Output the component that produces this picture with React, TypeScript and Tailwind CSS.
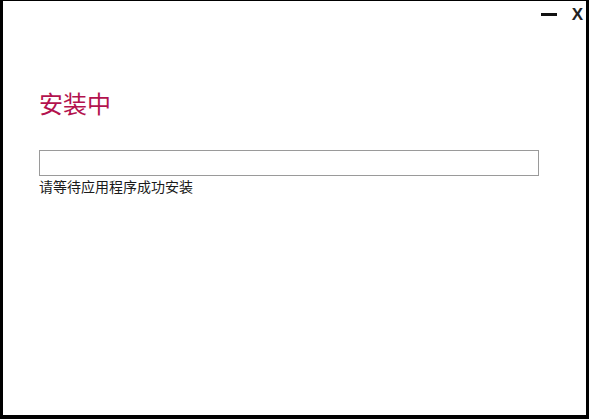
import React from "react";

export default function App() {
  return (
    <div
      className="w-[589px] h-[419px] bg-white border-black border-l-[3px] border-r-[3px] border-t-[1px] border-b-[4px] flex flex-col"
      style={{ fontFamily: '"Noto Sans CJK SC", "Noto Sans", sans-serif' }}
    >
      <div className="flex justify-end items-start h-[24px] pt-[5px] pr-[3px]">
        <div className="w-[16px] h-[3px] bg-[#111] mt-[7px] mr-[15px]" />
        <span
          className="text-[17px] leading-none font-bold text-[#222]"
          style={{ fontFamily: '"Liberation Sans", sans-serif' }}
        >
          X
        </span>
      </div>
      <div className="pl-[36px] pr-[47px]">
        <h1 className="mt-[63px] text-[24px] leading-[30px] text-[#b3124e] font-normal">安装中</h1>
        <div className="mt-[32px] h-[26px] border border-[#9a9a9a] bg-white" />
        <p className="mt-[0px] text-[14px] leading-[20px] text-[#1a1a1a]">请等待应用程序成功安装</p>
      </div>
    </div>
  );
}
